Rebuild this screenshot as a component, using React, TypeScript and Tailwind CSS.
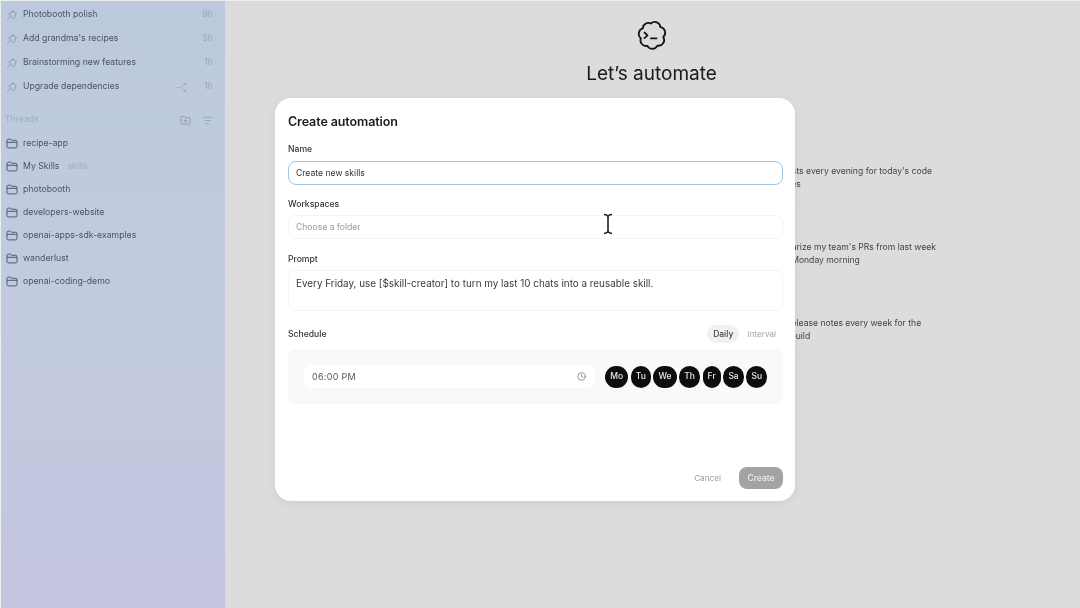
import { FolderPlus, ListFilter, Split, Clock } from "lucide-react";

const font = { fontFamily: "Inter, 'Liberation Sans', sans-serif" };

const pinned = [
  { t: "Photobooth polish", a: "9h" },
  { t: "Add grandma's recipes", a: "5h" },
  { t: "Brainstorming new features", a: "1h" },
  { t: "Upgrade dependencies", a: "1h", branch: true },
];
const folders = [
  { t: "recipe-app" },
  { t: "My Skills", tag: "skills" },
  { t: "photobooth" },
  { t: "developers-website" },
  { t: "openai-apps-sdk-examples" },
  { t: "wanderlust" },
  { t: "openai-coding-demo" },
];
const suggestions = [
  ["Run tests every evening for today's code", "changes"],
  ["Summarize my team's PRs from last week", "every Monday morning"],
  ["Draft release notes every week for the", "latest build"],
];
const days = ["Mo", "Tu", "We", "Th", "Fr", "Sa", "Su"];

function FolderIcon() {
  return (
    <svg width="12" height="11" viewBox="0 0 12 11" fill="none" stroke="#4f586b" strokeWidth="1" strokeLinejoin="round" className="shrink-0">
      <path d="M1 2.500a1.300 1.300 0 0 1 1.300-1.300h2.300l1.200 1.100h3.900A1.300 1.300 0 0 1 11 3.600v5a1.300 1.300 0 0 1-1.300 1.300H2.300A1.300 1.300 0 0 1 1 8.600z" />
      <path d="M1 4.300h10" />
    </svg>
  );
}

function PinIcon() {
  return (
    <svg width="12" height="12" viewBox="0 0 12 12" fill="none" stroke="#8f9ab0" strokeWidth="1" strokeLinejoin="round" strokeLinecap="round" className="shrink-0">
      <path d="M7 1.500l3.500 3.500-1 .6-.8 3-1.200 1.200-4.800-4.800 1.200-1.200 3-.8z" />
      <path d="M4.300 7.700L1.500 10.500" />
    </svg>
  );
}

function Sidebar() {
  return (
    <aside className="flex h-full w-[224px] shrink-0 flex-col bg-gradient-to-b from-[#bcc9dd] via-[#c2cbdf] to-[#c4c5e0] pl-[5px] pr-[12px] pt-[2px] text-[8.700px] text-[#4b5365]">
      {pinned.map((p) => (
        <div key={p.t} className="flex h-6 items-center">
          <PinIcon />
          <span className="ml-[5px] flex-1">{p.t}</span>
          {p.branch && <Split size={11} strokeWidth={1.2} className="mr-[17px] rotate-90 text-[#8f9ab0]" />}
          <span className="text-[#9aa5ba]">{p.a}</span>
        </div>
      ))}
      <div className="mt-[9px] flex h-6 items-center text-[#a2adc2]">
        <span className="-ml-[1px] flex-1">Threads</span>
        <FolderPlus size={11} strokeWidth={1.2} className="mr-[11px] text-[#6f7a90]" />
        <ListFilter size={11} strokeWidth={1.2} className="text-[#7f8aa0]" />
      </div>
      <div className="flex flex-col">
        {folders.map((f) => (
          <div key={f.t} className="flex h-[23px] items-center">
            <FolderIcon />
            <span className="ml-[5px]">{f.t}</span>
            {f.tag && <span className="ml-[8px] text-[#a2adc2]">{f.tag}</span>}
          </div>
        ))}
      </div>
    </aside>
  );
}

function Logo() {
  return (
    <svg width="30" height="30" viewBox="0 0 30 30" fill="none" stroke="#161616" strokeWidth="1.800" strokeLinecap="round" strokeLinejoin="round">
      <path d="M14 3.500A5.600 5.600 0 0 1 23.400 7.200A5.600 5.600 0 0 1 26.200 17A5.600 5.600 0 0 1 20.400 25.600A5.600 5.600 0 0 1 10.400 25.800A5.600 5.600 0 0 1 3.900 18.200A5.600 5.600 0 0 1 5.800 8.400A5.600 5.600 0 0 1 14 3.500z" />
      <path d="M7.500 12.500l3 2.800-3 2.800" />
      <path d="M14 18.400h5.500" />
    </svg>
  );
}

function Field({ label, gap, children }: { label: string; gap: string; children: React.ReactNode }) {
  return (
    <div>
      <div className={`${gap} text-[8.600px] font-medium leading-[12px] text-[#333]`}>{label}</div>
      {children}
    </div>
  );
}

function Modal() {
  return (
    <div className="absolute left-[274px] top-[97px] flex h-[403px] w-[520px] flex-col rounded-[16px] bg-white pb-[12px] pl-[13px] pr-[12px] pt-[15px] shadow-[0_2px_10px_rgba(0,0,0,0.06)]">
      <h2 className="text-[12.500px] font-semibold leading-[18px] tracking-[-0.1px] text-[#1c1c1c]">Create automation</h2>
      <div className="mt-[12px]">
        <Field label="Name" gap="mb-[6px]">
          <div className="flex h-[24px] items-center rounded-[8px] border-[1.500px] border-[#9cc8e4] px-[7px] text-[8.600px] text-[#333]">Create new skills</div>
        </Field>
      </div>
      <div className="mt-[13px]">
        <Field label="Workspaces" gap="mb-[5px]">
          <div className="flex h-[24px] items-center rounded-[7px] border border-[#f4f4f4] px-[7px] text-[8.600px] text-[#999]">Choose a folder</div>
        </Field>
      </div>
      <div className="mt-[14px]">
        <Field label="Prompt" gap="mb-[5px]">
          <div className="h-[41px] rounded-[7px] border border-[#f4f4f4] px-[7px] pt-[5px] text-[9.900px] leading-[14px] text-[#3a3a3a]">
            Every Friday, use [$skill-creator] to turn my last 10 chats into a reusable skill.
          </div>
        </Field>
      </div>
      <div className="mt-[12px] flex h-[22px] items-center justify-between">
        <span className="text-[8.600px] font-medium text-[#333]">Schedule</span>
        <div className="flex items-center text-[8.500px] font-medium">
          <span className="rounded-full bg-[#f1f1f1] px-[6px] py-[3px] text-[#444]">Daily</span>
          <span className="ml-[8px] mr-[7px] text-[8px] text-[#b0b0b0]">Interval</span>
        </div>
      </div>
      <div className="mt-[4px] flex h-[55px] items-center rounded-[6px] bg-[#f9f9f9] pl-[16px] pr-[16px]">
        <div className="flex h-[23px] flex-1 items-center justify-between rounded-[7px] bg-white pl-[8px] pr-[9px] text-[9px] tracking-[0.3px] text-[#555]">
          <span>06:00 PM</span>
          <Clock size={9} strokeWidth={1.6} className="text-[#555]" />
        </div>
        <div className="ml-[10px] flex gap-[2.700px]">
          {days.map((d) => (
            <span key={d} className="flex h-[22px] items-center justify-center rounded-full bg-[#0d0d0d] px-[5px] text-[8.500px] font-medium leading-none text-[#e8e8e8]">{d}</span>
          ))}
        </div>
      </div>
      <div className="mt-auto flex items-center justify-end">
        <span className="mr-[18px] text-[8.200px] text-[#9c9c9c]">Cancel</span>
        <span className="flex h-[22px] w-[44px] items-center justify-center rounded-[8px] bg-[#a3a3a3] text-[8.500px] font-medium text-[#ececec]">Create</span>
      </div>
    </div>
  );
}

export default function App() {
  return (
    <div style={font} className="relative flex h-[608px] w-[1080px] overflow-hidden border-t border-l border-[#eeeeee] bg-[#dcdcdc] blur-[0.35px]">
      <Sidebar />
      <main className="flex h-full w-[855px] min-w-0 flex-col items-center pr-[2px] pt-[19px]">
        <Logo />
        <h1 className="mt-[9px] text-[19px] font-normal leading-[30px] text-[#1a1a1a]">Let’s automate</h1>
        <div className="mt-[39px] w-full pl-[541px] pr-[150px] text-[8.600px] leading-[13px] text-[#444]">
          {suggestions.map(([a, b]) => (
            <div key={a} className="flex h-[76px] flex-col justify-end whitespace-nowrap border-b border-[#d8d8d8] pb-[12px]">
              <span>{a}</span>
              <span>{b}</span>
            </div>
          ))}
        </div>
      </main>
      <Modal />
      <svg className="absolute left-[601px] top-[212px]" width="12" height="22" viewBox="0 0 12 22" fill="none">
        <path d="M2 1.500c2 0 3.200.6 4 1.800.8-1.200 2-1.800 4-1.800M6 3.300v15.400M2 20.500c2 0 3.200-.6 4-1.800.8 1.200 2 1.800 4 1.800" stroke="#111" strokeWidth="1.500" />
      </svg>
    </div>
  );
}
